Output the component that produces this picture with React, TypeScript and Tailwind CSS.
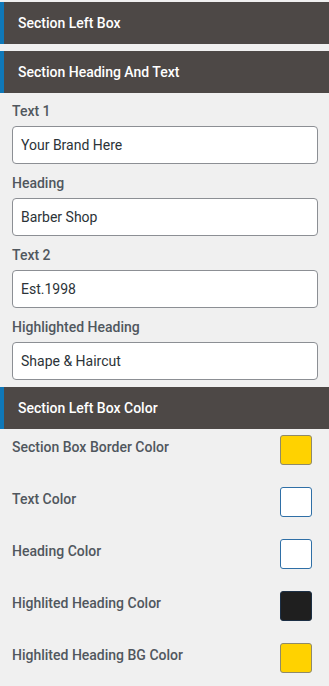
const font = { fontFamily: 'Roboto, "Liberation Sans", sans-serif' };

const fields = [
  { label: 'Text 1', value: 'Your Brand Here' },
  { label: 'Heading', value: 'Barber Shop' },
  { label: 'Text 2', value: 'Est.1998' },
  { label: 'Highlighted Heading', value: 'Shape & Haircut' },
];

const colors = [
  { label: 'Section Box Border Color', swatch: 'bg-[#ffd200] border-[#8f8a6a]' },
  { label: 'Text Color', swatch: 'bg-white border-[#2f6fa6]' },
  { label: 'Heading Color', swatch: 'bg-white border-[#2f6fa6]' },
  { label: 'Highlited Heading Color', swatch: 'bg-[#1f1f1f] border-[#1c2f45]' },
  { label: 'Highlited Heading BG Color', swatch: 'bg-[#ffd200] border-[#8f8a6a]' },
];

function SectionHeader({ title }: { title: string }) {
  return (
    <div className="h-[42px] flex items-center bg-[#4d4846] border-l-4 border-[#0f78b8] pl-[14px]">
      <span className="text-[14px] font-medium text-white">{title}</span>
    </div>
  );
}

export default function App() {
  return (
    <div className="w-[329px] h-[686px] bg-[#f0f0f0] pt-[2px] overflow-hidden" style={font}>
      <SectionHeader title="Section Left Box" />
      <div className="mt-[7px]">
        <SectionHeader title="Section Heading And Text" />
      </div>

      <div className="px-3 pt-[8px] pb-[7px]">
        {fields.map((f, i) => (
          <div key={f.label} className={i > 0 ? 'mt-[9px]' : ''}>
            <div className="h-5 leading-5 text-[14px] font-medium text-[#50575e]">{f.label}</div>
            <div className="mt-[5px] h-[38px] w-[306px] flex items-center bg-white border border-[#8c8f94] rounded-[4px] px-2 text-[14px] text-[#2c3338]">
              {f.value}
            </div>
          </div>
        ))}
      </div>

      <SectionHeader title="Section Left Box Color" />

      <div className="flex flex-col gap-[22px] pt-[6px] pl-3 pr-[17px]">
        {colors.map(c => (
          <div key={c.label} className="flex justify-between items-start">
            <span className="pt-[2px] leading-5 text-[14px] font-medium text-[#50575e]">{c.label}</span>
            <div className={`w-[32px] h-[30px] rounded-[3px] border ${c.swatch}`} />
          </div>
        ))}
      </div>
    </div>
  );
}
